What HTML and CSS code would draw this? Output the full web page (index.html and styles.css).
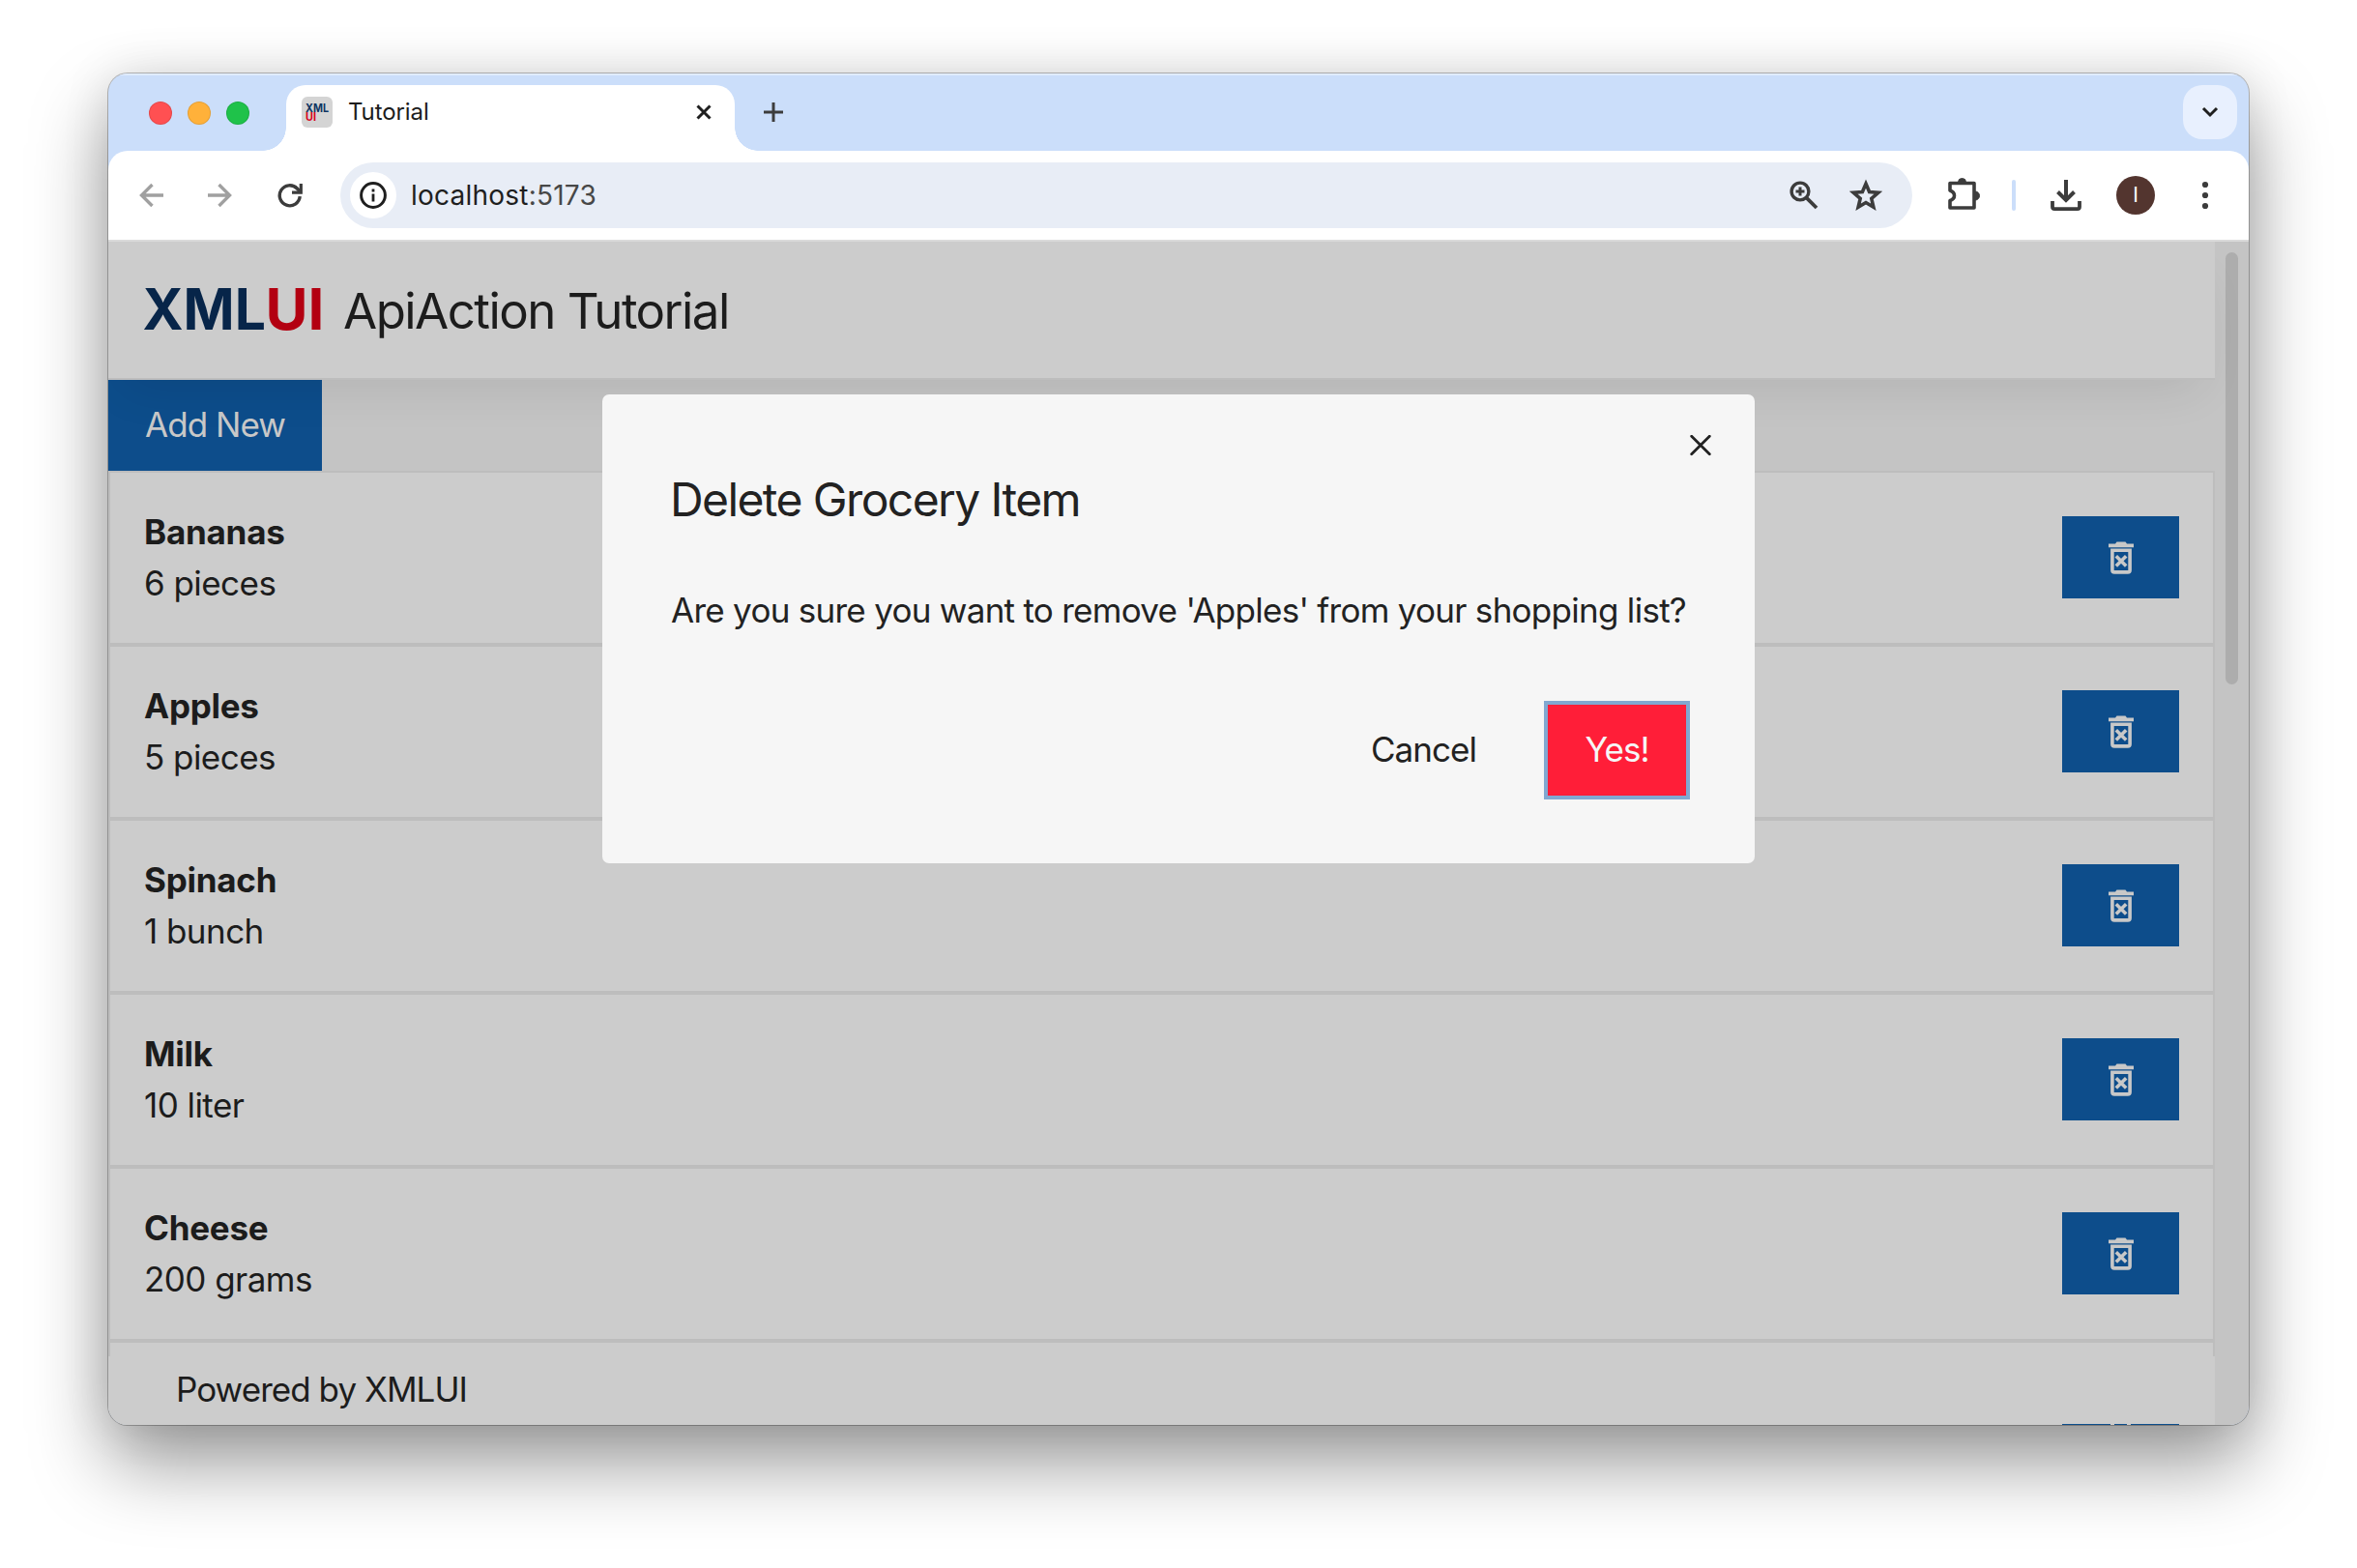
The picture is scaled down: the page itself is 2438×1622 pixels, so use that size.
FILE: index.html
```html
<!DOCTYPE html>
<html lang="en">
<head>
<meta charset="utf-8">
<title>Tutorial</title>
<link rel="stylesheet" href="styles.css">
</head>
<body>
<svg class="defs" width="0" height="0">
  <symbol id="trash" viewBox="0 0 26 34">
    <path fill="currentColor" d="M0 2.400h7L8.500 0.600h9L19 2.400h7v3.800H0z"/>
    <path fill="none" stroke="currentColor" stroke-width="3.600" d="M3.900 9.200h18.200v20.500q0 2.200-2.200 2.200H6.100q-2.200 0-2.200-2.200z"/>
    <path fill="none" stroke="currentColor" stroke-width="3.600" d="M7.800 15.200l10.400 10.400M18.200 15.200L7.800 25.600"/>
  </symbol>
</svg>
<div class="window">
  <div class="tabstrip">
    <div class="lights"><i class="red"></i><i class="yellow"></i><i class="green"></i></div>
    <div class="tab">
      <svg class="favicon" viewBox="0 0 32 32"><rect width="32" height="32" rx="6" fill="#d4d4d4"/><text x="4" y="15.500" textLength="24" lengthAdjust="spacingAndGlyphs" class="fav-a">XML</text><text x="4" y="25" textLength="11" lengthAdjust="spacingAndGlyphs" class="fav-b">UI</text></svg>
      <span class="tab-title">Tutorial</span>
      <svg class="tab-close" viewBox="0 0 16 16"><path d="M1.500 1.500l13 13M14.500 1.500l-13 13" stroke="#1f1f1f" stroke-width="3"/></svg>
    </div>
    <svg class="plus" viewBox="0 0 20 20"><path d="M10 0v20M0 10h20" stroke="#3c3c3c" stroke-width="3"/></svg>
    <div class="tab-menu"><svg width="18" height="12" viewBox="0 0 18 12"><path d="M2 2l7 7 7-7" fill="none" stroke="#1f1f1f" stroke-width="3"/></svg></div>
  </div>
  <div class="toolbar">
    <svg class="ico back" viewBox="0 0 26 26"><path d="M25 13H3M13.500 2L2.500 13l11 11" fill="none" stroke="#a0a0a0" stroke-width="3.400"/></svg>
    <svg class="ico fwd" viewBox="0 0 26 26"><path d="M0 13h22M11.500 2l11 11-11 11" fill="none" stroke="#a0a0a0" stroke-width="3.400"/></svg>
    <svg class="ico reload" viewBox="0 0 26 26"><path d="M23.200 14.200A10.500 10.500 0 1 1 20.300 6l3 3" fill="none" stroke="#3c3c3c" stroke-width="3.400"/><path d="M24.300 1v9.200H15" fill="none" stroke="#3c3c3c" stroke-width="3.200"/></svg>
    <div class="address">
      <div class="info"><svg width="28" height="28" viewBox="0 0 28 28"><circle cx="14" cy="14" r="12.400" fill="none" stroke="#1f1f1f" stroke-width="3"/><path d="M14 12.600v7.800M14 7.600v3" stroke="#1f1f1f" stroke-width="2.800"/></svg></div>
      <span class="url">localhost<em>:5173</em></span>
      <svg class="mag" viewBox="0 0 30 30"><circle cx="11" cy="11" r="8.900" fill="none" stroke="#3c3c3c" stroke-width="3.400"/><path d="M17.300 17.300l10.700 10.700" stroke="#3c3c3c" stroke-width="3.800"/><path d="M11 6.500v9M6.500 11h9" stroke="#3c3c3c" stroke-width="3"/></svg>
      <svg class="star" viewBox="0 0 34 34"><path d="M17 5l3.600 8.500 9.100.8-6.900 6 2.100 9-7.900-4.800-7.900 4.800 2.100-9-6.900-6 9.100-.8z" fill="none" stroke="#3c3c3c" stroke-width="3.600"/></svg>
    </div>
    <svg class="puzzle" viewBox="0 0 34 36"><path d="M3 6.500h25v25.500h-25v-7.500q4.500-1.500 4.500-5.250t-4.500-5.250z" fill="none" stroke="#3c3c3c" stroke-width="3.600" stroke-linejoin="round"/><path d="M11.500 5.500a4 4 0 0 1 8 0zM29 15a4 4 0 0 1 0 9z" fill="#3c3c3c" stroke="#3c3c3c"/></svg>
    <div class="vline"></div>
    <svg class="download" viewBox="0 0 32 34"><path d="M16 1v21M7.500 13.500l8.500 8.500 8.500-8.500" fill="none" stroke="#3c3c3c" stroke-width="4"/><path d="M2 23v6q0 2.200 2.200 2.200h23.600q2.200 0 2.200-2.200v-6" fill="none" stroke="#3c3c3c" stroke-width="3.800"/></svg>
    <div class="avatar">I</div>
    <svg class="dots" viewBox="0 0 8 30"><circle cx="4" cy="4" r="3.100"/><circle cx="4" cy="15" r="3.100"/><circle cx="4" cy="26" r="3.100"/></svg>
  </div>
  <div class="viewport">
    <div class="page">
      <header class="header">
        <svg class="logo" viewBox="0 0 184 50"><text x="-1.500" y="46" textLength="127.500" lengthAdjust="spacingAndGlyphs" class="logo-a">XML</text><text x="125.500" y="46" textLength="61" lengthAdjust="spacingAndGlyphs" class="logo-b">UI</text></svg>
        <span class="app-name">ApiAction Tutorial</span>
      </header>
      <main class="main">
        <button class="btn add"><span>Add New</span></button>
        <div class="card"><div><b>Bananas</b><p>6 pieces</p></div><button class="btn del"><svg width="26" height="34"><use href="#trash"/></svg></button></div>
        <div class="card"><div><b>Apples</b><p>5 pieces</p></div><button class="btn del"><svg width="26" height="34"><use href="#trash"/></svg></button></div>
        <div class="card"><div><b>Spinach</b><p>1 bunch</p></div><button class="btn del"><svg width="26" height="34"><use href="#trash"/></svg></button></div>
        <div class="card"><div><b>Milk</b><p>10 liter</p></div><button class="btn del"><svg width="26" height="34"><use href="#trash"/></svg></button></div>
        <div class="card"><div><b>Cheese</b><p>200 grams</p></div><button class="btn del"><svg width="26" height="34"><use href="#trash"/></svg></button></div>
        <div class="card last"></div>
      </main>
      <footer class="footer"><span>Powered by XMLUI</span><div class="peek"><i></i><i></i><i></i></div></footer>
    </div>
    <div class="scroll"><div class="thumb"></div></div>
    <div class="modal">
      <svg class="modal-close" viewBox="0 0 22 22"><path d="M1.700 1.200l18.600 18.600M20.300 1.200L1.700 19.800" stroke="#222" stroke-width="2.800" stroke-linecap="round"/></svg>
      <h2><span>Delete Grocery Item</span></h2>
      <p class="msg"><span>Are you sure you want to remove 'Apples' from your shopping list?</span></p>
      <div class="actions"><button class="btn cancel"><span>Cancel</span></button><button class="btn yes"><span>Yes!</span></button></div>
    </div>
  </div>
</div>
</body>
</html>
```
FILE: styles.css
```css
* { box-sizing: border-box; margin: 0; padding: 0; }
body { width: 2438px; height: 1622px; padding: 76px 112px 0; background: #fff; overflow: hidden; font-family: Inter, "Liberation Sans", sans-serif; font-size: 35px; line-height: 54px; color: #1c1c1c; }
svg { display: block; flex: none; }
.defs { position: absolute; }
.window { width: 2214px; height: 1398px; border-radius: 20px; overflow: hidden; background: #cbdefa; box-shadow: 0 0 0 1px rgba(0,0,0,.25), 0 40px 80px rgba(0,0,0,.4), 0 0 50px rgba(0,0,0,.1); display: flex; flex-direction: column; }
.tabstrip { height: 80px; flex: none; display: flex; align-items: flex-start; border-top: 2px solid #e0ecfd; }
.lights { display: flex; gap: 16px; padding: 27px 0 0 42px; width: 184px; }
.lights i { width: 24px; height: 24px; border-radius: 50%; border: 1px solid rgba(0,0,0,.1); }
.red { background: #ff5052; } .yellow { background: #ffb13a; } .green { background: #1fc24a; }
.tab { position: relative; width: 464px; height: 68px; margin-top: 10px; background: #fff; border-radius: 20px 20px 0 0; display: flex; align-items: center; padding: 0 24px 12px 16px; }
.tab::before, .tab::after { content: ""; position: absolute; bottom: 0; width: 24px; height: 24px; }
.tab::before { left: -24px; background: radial-gradient(circle at 0 0, transparent 23.500px, #fff 24px); }
.tab::after { right: -24px; background: radial-gradient(circle at 100% 0, transparent 23.500px, #fff 24px); }
.favicon { width: 32px; height: 32px; }
.fav-a { font-weight: 700; font-size: 11.500px; fill: #0f3562; } .fav-b { font-weight: 700; font-size: 11.500px; fill: #d8001d; }
.tab-title { font-size: 24px; line-height: 32px; margin-left: 16px; flex: 1; letter-spacing: -.1px; }
.tab-close { width: 16px; height: 16px; }
.plus { width: 20px; height: 20px; margin: 28px 0 0 30px; }
.tab-menu { width: 56px; height: 56px; margin: 10px 12px 0 auto; border-radius: 20px; background: #e8f0fe; display: flex; align-items: center; justify-content: center; }
.toolbar { height: 94px; flex: none; background: #fff; border-radius: 20px 20px 0 0; border-bottom: 2px solid #dadada; display: flex; align-items: center; padding-left: 32px; }
.ico { width: 26px; height: 26px; }
.fwd { margin-left: 45px; } .reload { margin-left: 46px; }
.address { width: 1626px; height: 68px; margin-left: 39px; border-radius: 34px; background: #e8edf6; display: flex; align-items: center; padding-left: 10px; }
.info { width: 48px; height: 48px; border-radius: 50%; background: #fff; display: flex; align-items: center; justify-content: center; }
.url { font-size: 28px; margin-left: 15px; flex: 1; color: #1f1f1f; letter-spacing: .23px; } .url em { font-style: normal; color: #474747; }
.mag { width: 30px; height: 30px; } .star { width: 34px; height: 34px; margin: 0 31px 0 32px; }
.puzzle { width: 34px; height: 36px; margin: -3px 0 0 36px; }
.vline { width: 4px; height: 32px; border-radius: 2px; background: #cbdefa; margin-left: 33px; }
.download { width: 32px; height: 34px; margin-left: 36px; }
.avatar { width: 40px; height: 40px; border-radius: 50%; background: #53352f; color: #fff; font-size: 21px; line-height: 40px; text-align: center; margin-left: 36px; }
.dots { width: 8px; height: 30px; margin-left: 48px; fill: #3c3c3c; }
.viewport { position: relative; flex: 1; display: flex; min-height: 0; }
.page { width: 2179px; display: flex; flex-direction: column; background: #c4c4c4; }
.header { position: relative; z-index: 1; height: 143px; flex: none; background: #ccc; border-bottom: 2px solid #bdbdbd; box-shadow: 0 24px 50px -16px rgba(0,0,0,.09); display: flex; align-items: center; padding-left: 37px; }
.logo { width: 184px; height: 50px; margin-top: -1px; overflow: visible; }
.logo-a, .logo-b { font-size: 59px; font-weight: 700; } .logo-a { fill: #072549; } .logo-b { fill: #b30011; }
.app-name { font-size: 51px; margin-left: 22px; margin-top: 2px; letter-spacing: -1.550px; }
.main { height: 1010px; flex: none; overflow: hidden; }
.btn { display: flex; align-items: center; justify-content: center; border: 0; font: inherit; background: #0d4d8b; color: #c8c8c8; letter-spacing: -.95px; padding-bottom: 2px; }
.add { width: 221px; height: 94px; }
.card { position: relative; z-index: 2; height: 180px; border: 2px solid #bdbdbd; background: #ccc; display: flex; align-items: center; justify-content: space-between; padding: 0 35px 1px; }
.card b { font-weight: 700; display: block; letter-spacing: -.25px; } .card p { line-height: 53px; letter-spacing: -.55px; }
.del { width: 121px; height: 85px; padding-bottom: 0; }
.footer { flex: 1; background: #ccc; display: flex; justify-content: space-between; padding: 7px 37px 0 70px; position: relative; z-index: 3; letter-spacing: -.95px; }
.peek { display: flex; gap: 4px; width: 121px; height: 1px; align-self: flex-end; } .peek i { background: #0d4d8b; width: 50px; } .peek i:nth-child(2) { width: 14px; }
.scroll { width: 35px; background: #c4c4c4; padding: 11px 11px 0; } .thumb { width: 13px; height: 447px; border-radius: 7px; background: #adadad; }
.modal { position: absolute; z-index: 5; left: 511px; top: 158px; width: 1192px; height: 485px; border-radius: 7px; background: #f6f6f6; color: #222; padding: 79px 71px 70px; display: flex; flex-direction: column; }
.modal-close { position: absolute; right: 45px; top: 42px; width: 22px; height: 22px; }
.modal h2 { font-size: 48px; font-weight: 400; line-height: 60px; letter-spacing: -1.600px; margin-left: -1px; }
.msg { margin-top: 57px; white-space: nowrap; letter-spacing: -.72px; }
.actions { margin-top: auto; display: flex; justify-content: flex-end; gap: 37px; }
.cancel { width: 183px; height: 94px; background: none; color: #222; }
.yes { width: 143px; height: 94px; background: #ff1e38; color: #f6f6f6; outline: 4px solid #81a8d1; }
```
